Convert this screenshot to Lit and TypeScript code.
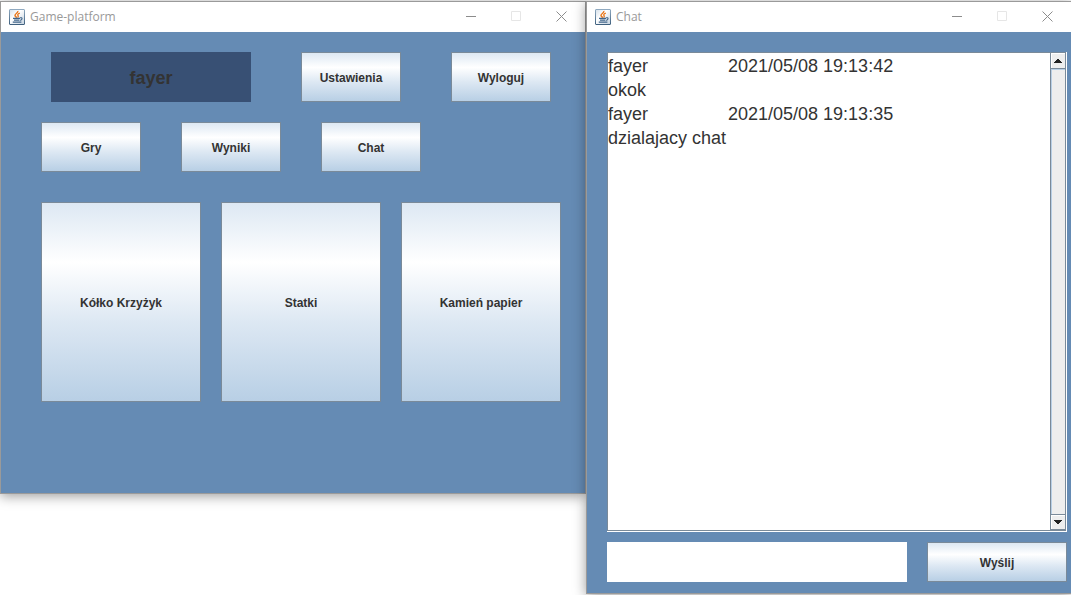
import { LitElement, html, css, svg } from "lit";
import { customElement, property } from "lit/decorators.js";

const javaIcon = svg`
  <defs>
    <linearGradient id="face" x1="0" y1="0" x2="1" y2="1">
      <stop offset="0" stop-color="#d4dfe9" />
      <stop offset="0.4" stop-color="#ffffff" />
      <stop offset="1" stop-color="#c3d1de" />
    </linearGradient>
    <linearGradient id="rim" x1="0" y1="0" x2="0" y2="1">
      <stop offset="0" stop-color="#8fa9c0" />
      <stop offset="1" stop-color="#3f607e" />
    </linearGradient>
  </defs>
  <rect x="0.5" y="0.5" width="15" height="15" rx="0.5" fill="url(#face)" stroke="url(#rim)" />
  <path d="M8.8 2C9.6 4 5.2 5 6 6.8L7.8 8.8" fill="none" stroke="#e8761a" stroke-width="1.5" />
  <path d="M10.8 4.2C8.6 5 8.2 5.9 9.2 6.8C9.5 7.3 9.2 7.9 8.6 8.5" fill="none" stroke="#e8761a" stroke-width="1.3" />
  <path d="M4 9.4H11M5 11.2H10.4M3.8 13.2H12.4" fill="none" stroke="#41658a" stroke-width="1.2" />
  <path d="M11 8.8C13.8 8.2 13.6 10.6 11.2 11.4" fill="none" stroke="#41658a" stroke-width="1.1" />
`;

@customElement("desktop-window")
export class DesktopWindow extends LitElement {
  @property() caption = "";

  static styles = css`
    :host {
      display: flex;
      flex-direction: column;
      box-sizing: border-box;
      border: 1px solid #9a9a9a;
      background: #658bb4;
      box-shadow: 0 2px 12px rgba(0, 0, 0, 0.4);
    }
    .titlebar {
      display: flex;
      align-items: center;
      height: 30px;
      padding: 0 1px 0 8px;
      background: #fff;
      color: #999;
      font: 12px/16px "Open Sans", "Noto Sans", sans-serif;
    }
    .icon {
      width: 16px;
      height: 16px;
      margin-right: 5px;
    }
    .caption {
      flex: 1;
      font: inherit;
      margin: 0;
    }
    .control {
      display: flex;
      align-items: center;
      justify-content: center;
      box-sizing: border-box;
      width: 45px;
      height: 30px;
      padding: 0 0 1px;
      border: 0;
      background: none;
      color: #8c8c8c;
    }
    .control:disabled {
      color: #e6e6e6;
    }
    .glyph {
      width: 11px;
      height: 11px;
      fill: none;
      stroke: currentColor;
    }
  `;

  render() {
    return html`
      <header class="titlebar">
        <svg class="icon" viewBox="0 0 16 16" aria-hidden="true">${javaIcon}</svg>
        <h1 class="caption">${this.caption}</h1>
        <button class="control" aria-label="Minimize">
          <svg class="glyph" viewBox="0 0 11 11"><path d="M0 5.5H10" /></svg>
        </button>
        <button class="control" aria-label="Maximize" disabled>
          <svg class="glyph" viewBox="0 0 11 11"><path d="M0.5 0.5H9.5V9.5H0.5Z" /></svg>
        </button>
        <button class="control" aria-label="Close">
          <svg class="glyph" viewBox="0 0 11 11"><path d="M0.5 0.5L10.5 10.5M10.5 0.5L0.5 10.5" /></svg>
        </button>
      </header>
      <slot></slot>
    `;
  }
}

const metalButton = css`
  .button {
    box-sizing: border-box;
    height: 50px;
    width: 100px;
    padding: 2px 0 0;
    border: 1px solid #7a8a99;
    background: linear-gradient(#dde8f3, #fff 30%, #dde8f3 60%, #b8cfe5);
    color: #333;
    font: bold 12px/16px "Liberation Sans", Arial, sans-serif;
  }
`;

@customElement("platform-panel")
export class PlatformPanel extends LitElement {
  @property() user = "";

  static styles = [
    metalButton,
    css`
      :host {
        display: flex;
        flex-direction: column;
        gap: 20px;
        padding: 20px 24px 91px 40px;
      }
      .row {
        display: flex;
      }
      .account {
        gap: 50px;
        padding-left: 10px;
      }
      .user {
        box-sizing: border-box;
        width: 200px;
        height: 50px;
        padding-top: 2px;
        background: #385074;
        color: #333;
        font: bold 18px/48px "Liberation Sans", Arial, sans-serif;
        text-align: center;
      }
      .tabs {
        gap: 40px;
      }
      .games {
        gap: 20px;
        padding-top: 10px;
      }
      .game {
        width: 160px;
        height: 200px;
      }
    `,
  ];

  render() {
    return html`
      <div class="row account">
        <div class="user">${this.user}</div>
        <button class="button">Ustawienia</button>
        <button class="button">Wyloguj</button>
      </div>
      <nav class="row tabs">
        ${["Gry", "Wyniki", "Chat"].map((t) => html`<button class="button">${t}</button>`)}
      </nav>
      <div class="row games">
        ${["Kółko Krzyżyk", "Statki", "Kamień papier"].map(
          (g) => html`<button class="button game">${g}</button>`
        )}
      </div>
    `;
  }
}

interface Message {
  author: string;
  time: string;
  text: string;
}

@customElement("chat-panel")
export class ChatPanel extends LitElement {
  @property({ attribute: false }) messages: Message[] = [];

  static styles = [
    metalButton,
    css`
      :host {
        display: flex;
        flex-direction: column;
        flex: 1;
        gap: 10px;
        padding: 20px 4px 11px 20px;
      }
      .pane {
        display: flex;
        flex: 1;
        border-right: 1px solid #fff;
        border-bottom: 1px solid #fff;
      }
      .view {
        display: flex;
        flex: 1;
        border: 1px solid #7a8a99;
        background: #fff;
      }
      .log {
        flex: 1;
        min-width: 0;
        box-sizing: border-box;
        padding: 1px 0 0;
        border: 0;
        outline: 0;
        resize: none;
        overflow: hidden;
        color: #333;
        background: #fff;
        font: 18px/24px "Liberation Sans", Arial, sans-serif;
        tab-size: 120px;
      }
      .scrollbar {
        display: flex;
        flex-direction: column;
        justify-content: space-between;
        box-sizing: border-box;
        width: 15px;
        border-left: 1px solid #7a8a99;
        background: #eee;
        box-shadow: inset 1px 0 #b8cfe5;
      }
      .arrow {
        display: flex;
        align-items: center;
        justify-content: center;
        box-sizing: border-box;
        width: 14px;
        height: 16px;
        padding: 0;
        border: 0;
        border-bottom: 1px solid #7a8a99;
        background: #eee;
        box-shadow: inset 1px 1px #fff, 0 1px #b8cfe5;
      }
      .down {
        border-top: 1px solid #7a8a99;
        box-shadow: inset 1px 1px #fff;
      }
      .triangle {
        width: 8px;
        height: 4px;
        fill: #222;
        shape-rendering: crispEdges;
      }
      .compose {
        display: flex;
        gap: 20px;
      }
      .message {
        box-sizing: border-box;
        flex: 1;
        min-width: 0;
        height: 40px;
        padding: 0 4px;
        border: 0;
        outline: 0;
        background: #fff;
        color: #333;
        font: 18px/24px "Liberation Sans", Arial, sans-serif;
      }
      .send {
        width: 140px;
        height: 40px;
      }
    `,
  ];

  render() {
    const log = this.messages.map((m) => `${m.author}\t${m.time}\n${m.text}`).join("\n");
    return html`
      <div class="pane">
        <div class="view">
          <textarea class="log" readonly aria-label="Chat" .value=${log}></textarea>
          <div class="scrollbar">
            <button class="arrow" aria-label="Scroll up">
              <svg class="triangle" viewBox="0 0 8 4"><path d="M3 0H5V1H6V2H7V3H8V4H0V3H1V2H2V1H3Z" /></svg>
            </button>
            <button class="arrow down" aria-label="Scroll down">
              <svg class="triangle" viewBox="0 0 8 4"><path d="M0 0H8V1H7V2H6V3H5V4H3V3H2V2H1V1H0Z" /></svg>
            </button>
          </div>
        </div>
      </div>
      <form class="compose" @submit=${(e: Event) => e.preventDefault()}>
        <input class="message" type="text" aria-label="Wiadomość" />
        <button class="button send">Wyślij</button>
      </form>
    `;
  }
}

@customElement("app-root")
export class AppRoot extends LitElement {
  static styles = css`
    :host {
      display: flex;
      align-items: flex-start;
      box-sizing: border-box;
      min-height: 100vh;
      padding: 1px 0;
      background: #fff;
      overflow: hidden;
    }
    .platform {
      flex: none;
    }
    .chat {
      flex: 1;
      align-self: stretch;
      border-right: 0;
    }
  `;

  private messages: Message[] = [
    { author: "fayer", time: "2021/05/08 19:13:42", text: "okok" },
    { author: "fayer", time: "2021/05/08 19:13:35", text: "dzialajacy chat" },
  ];

  render() {
    return html`
      <desktop-window class="platform" caption="Game-platform">
        <platform-panel user="fayer"></platform-panel>
      </desktop-window>
      <desktop-window class="chat" caption="Chat">
        <chat-panel .messages=${this.messages}></chat-panel>
      </desktop-window>
    `;
  }
}
